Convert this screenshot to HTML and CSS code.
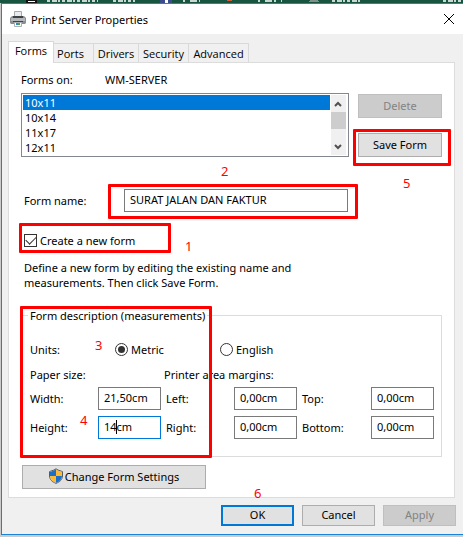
FILE: index.html
```html
<!DOCTYPE html>
<html lang="en">
<head>
<meta charset="utf-8">
<title>Print Server Properties</title>
<link rel="stylesheet" href="styles.css">
</head>
<body>
<div class="backdrop" aria-hidden="true">
  <svg width="463" height="3" viewBox="0 0 463 3">
    <path fill="#111" d="M26 0h11v3H26z"/>
    <path fill="#fff" d="M28 1h7v1h-7z"/>
    <path stroke="#c9d8d0" stroke-width="2" stroke-dasharray="3 2 5 1 2 2" d="M47 1h51M113 1h22M332 1h29M443 1h20"/>
    <path stroke="#c9d8d0" stroke-width="2" stroke-dasharray="2 5 7 2" d="M183 1h17M258 1h24"/>
    <path fill="#3b4c8c" d="M160 0h12v3h-12z"/>
    <path fill="#fff" d="M165 0h3v3h-3z"/>
    <path fill="#d8573c" d="M227 0h5v1h-5z"/>
    <path fill="#81908a" d="M310 0h8v1h1v1h-10V1h1z"/>
  </svg>
</div>
<main class="window">
  <header class="titlebar">
    <svg class="printer" width="16" height="16" viewBox="0 0 16 16" aria-hidden="true">
      <path fill="#e8ecee" stroke="#a4a9ac" d="M4.500.5h7v5h-7z"/>
      <path fill="#8b8f92" d="M2 5h12l2 2v5l-1 1H1l-1-1V7z"/>
      <path fill="#b4b8ba" d="M1 7h14v3H1z"/>
      <path fill="#404346" d="M3 5h10v2H3zM3 10h10v1H3z"/>
      <path fill="#fff" stroke="#aab0b3" d="M4.500 11.500h7v4h-7z"/>
      <path fill="#2c8ad0" d="M6 12h2v2H6z"/>
      <path fill="#45a45a" d="M8 12h2v2H8z"/>
    </svg>
    <h1 class="title">Print Server Properties</h1>
    <button class="close" type="button" aria-label="Close">
      <svg width="10" height="10" viewBox="0 0 10 10"><path stroke="#000" d="M0 0l10 10M10 0L0 10"/></svg>
    </button>
  </header>
  <nav class="tabs" role="tablist">
    <button class="tab tab-forms" type="button" role="tab" aria-selected="true">Forms</button>
    <button class="tab tab-ports" type="button" role="tab">Ports</button>
    <button class="tab tab-drivers" type="button" role="tab">Drivers</button>
    <button class="tab tab-security" type="button" role="tab">Security</button>
    <button class="tab tab-advanced" type="button" role="tab">Advanced</button>
  </nav>
  <form class="panel">
    <div class="server"><span class="server-label">Forms on:</span><span>WM-SERVER</span></div>
    <div class="forms">
      <div class="listbox">
        <ul class="list" role="listbox" aria-label="Forms">
          <li class="item selected" role="option" aria-selected="true">10x11</li>
          <li class="item" role="option">10x14</li>
          <li class="item" role="option">11x17</li>
          <li class="item" role="option">12x11</li>
        </ul>
        <div class="scrollbar" aria-hidden="true">
          <svg class="arrow" width="15" height="17" viewBox="0 0 15 17"><path fill="none" stroke="#505050" stroke-width="2" d="M4 11l3-3 3 3"/></svg>
          <div class="thumb"></div>
          <svg class="arrow" width="15" height="17" viewBox="0 0 15 17"><path fill="none" stroke="#505050" stroke-width="2" d="M4 7l3 3 3-3"/></svg>
        </div>
      </div>
      <div class="actions">
        <button class="button" type="button" disabled>Delete</button>
        <div class="marked mark-save"><button class="button" type="button">Save Form</button><span class="step">5</span></div>
      </div>
    </div>
    <div class="name-row">
      <label for="name">Form name:</label>
      <div class="marked mark-name"><input class="text name" id="name" type="text" value="SURAT JALAN DAN FAKTUR"><span class="step">2</span></div>
    </div>
    <div class="marked mark-create">
      <label class="choice"><input class="check" type="checkbox" checked>Create a new form</label>
      <span class="step">1</span>
    </div>
    <p class="help">Define a new form by editing the existing name and<br>measurements. Then click Save Form.</p>
    <div class="marked mark-description">
      <fieldset class="group">
        <legend class="legend">Form description (measurements)</legend>
        <div class="units">
          <span class="units-label">Units:</span>
          <label class="choice metric"><input class="radio" type="radio" name="units" checked>Metric</label>
          <label class="choice"><input class="radio" type="radio" name="units">English</label>
        </div>
        <div class="captions"><span>Paper size:</span><span>Printer area margins:</span></div>
        <div class="sizes">
          <label for="width">Width:</label><input class="text" id="width" type="text" value="21,50cm">
          <label for="left">Left:</label><input class="text" id="left" type="text" value="0,00cm">
          <label for="top">Top:</label><input class="text" id="top" type="text" value="0,00cm">
          <label for="height">Height:</label><div class="editing"><input class="text focused" id="height" type="text" value="14cm"><span class="caret"></span></div>
          <label for="right">Right:</label><input class="text" id="right" type="text" value="0,00cm">
          <label for="bottom">Bottom:</label><input class="text" id="bottom" type="text" value="0,00cm">
        </div>
      </fieldset>
      <span class="step step-units">3</span>
      <span class="step step-height">4</span>
    </div>
    <button class="button settings" type="button">
      <svg width="14" height="16" viewBox="0 0 14 16" aria-hidden="true">
        <path fill="#fff" d="M7 0l2 1.500L14 3v5c0 4-3 6.500-7 8-4-1.500-7-4-7-8V3l5-1.500z"/>
        <path fill="#1b6fc8" d="M7 1v7H1V4l4-1.500z"/>
        <path fill="#fdbb35" d="M7 1l2 1.500L13 4v4H7z"/>
        <path fill="#fdbb35" d="M1 8h6v7c-4-1.500-6-4-6-7z"/>
        <path fill="#1b6fc8" d="M7 8h6c0 3-2 5.500-6 7z"/>
        <path fill="none" stroke="#555b60" d="M7 .7l2 1.300 4.500 1.500V8c0 3.500-2.500 6-6.500 7.400C3 14 .5 11.500.5 8V3.500L5 2z"/>
      </svg>Change Form Settings
    </button>
  </form>
  <footer class="footer">
    <div class="ok-wrap"><button class="button short default" type="button">OK</button><span class="step step-ok">6</span></div>
    <button class="button short" type="button">Cancel</button>
    <button class="button short" type="button" disabled>Apply</button>
  </footer>
</main>
</body>
</html>
```
FILE: styles.css
```css
*, *::before, *::after { box-sizing: border-box; }

body {
  margin: 0;
  padding: 0 0 2px 1px;
  background: #cbcbcb;
  color: #000;
  font: 11px/15px "Noto Sans", "Open Sans", sans-serif;
}

button, input { font: inherit; color: inherit; }

.backdrop { height: 3px; margin-left: -1px; overflow: hidden; background: #175541; }
.backdrop svg { display: block; }

.window {
  border: 1px solid #1883d7;
  border-right: 0;
  background: #f0f0f0;
}

.titlebar {
  display: flex;
  align-items: center;
  height: 30px;
  padding: 0 9px 0 8px;
  background: #fff;
}
.title { flex: 1; margin: 0 0 0 5px; font-size: 11px; font-weight: 400; }
.close { display: flex; padding: 0; border: 0; background: none; }

.tabs { display: flex; align-items: flex-end; height: 28px; padding-left: 6px; font-family: "Open Sans", "Noto Sans", sans-serif; }
.tab {
  height: 19px;
  padding: 0;
  border: 1px solid #d9d9d9;
  border-width: 1px 1px 0 0;
  background: #f0f0f0;
  text-align: center;
}
.tab-forms {
  position: relative;
  width: 46px;
  height: 22px;
  margin-bottom: -1px;
  padding-bottom: 4px;
  border-left-width: 1px;
  background: #fff;
}
.tab-ports { width: 40px; padding-right: 6px; }
.tab-drivers { width: 45px; }
.tab-security { width: 50px; }
.tab-advanced { width: 60px; }

.panel {
  margin: 0 8px 0 6px;
  padding: 9px 12px 8px;
  border: 1px solid #dcdcdc;
  background: #fff;
}

.server { display: flex; }
.server-label { width: 84px; }

.forms { display: flex; gap: 9px; margin-top: 6px; }
.listbox {
  display: flex;
  flex: 1;
  height: 64px;
  padding: 1px 2px 1px 1px;
  border: 1px solid #828790;
}
.list { flex: 1; margin: 0 1px 0 0; padding: 0; list-style: none; }
.item { padding-left: 2px; }
.selected { background: #0078d7; color: #fff; }
.scrollbar { display: flex; flex-direction: column; width: 15px; background: #f0f0f0; }
.arrow { display: block; }
.thumb { height: 17px; margin-bottom: auto; background: #cdcdcd; }

.actions { display: flex; flex-direction: column; justify-content: space-between; width: 84px; padding-top: 1px; }
.button {
  width: 100%;
  height: 24px;
  padding: 0 0 2px;
  border: 1px solid #adadad;
  background: #e1e1e1;
}
.button:disabled { border-color: #bfbfbf; background: #ccc; color: #838383; }

.marked { position: relative; }
.marked::after {
  content: "";
  position: absolute;
  border: 3px solid #f00;
  border-radius: 1px;
  pointer-events: none;
}
.mark-save::after { inset: -4px -9px -9px -5px; }
.mark-name::after { inset: -5px -10px -7px -16px; }
.mark-create::after { inset: -10px auto -5px -2px; width: 152px; }
.mark-description::after { inset: -2px auto -1px -1px; width: 192px; }

.step { position: absolute; color: #f00; font-size: 13px; line-height: 16px; }
.mark-save .step { left: 45px; top: 42px; }
.mark-name .step { left: 97px; top: -26px; }
.mark-create .step { left: 164px; top: 5px; }
.step-units { left: 74px; top: 29px; }
.step-height { left: 59px; top: 104px; }
.step-ok { left: 33px; top: -20px; }

.text {
  width: 100%;
  height: 23px;
  padding: 0 5px 2px;
  border: 1px solid #7a7a7a;
  background: #fff;
  outline: 0;
}
.focused { border-color: #0078d7; }

.name-row { display: grid; grid-template-columns: 100px 1fr; align-items: center; margin: 32px 94px 0 3px; }
.mark-name { display: flex; }

.mark-create { margin-top: 21px; }
.choice { display: flex; align-items: center; gap: 3px; }
.mark-create .choice { padding-left: 3px; }
.check, .radio {
  flex: none;
  appearance: none;
  width: 13px;
  height: 13px;
  margin: 0;
  border: 1px solid #333;
  background: #fff;
}
.check:checked::before {
  content: "";
  display: block;
  width: 10px;
  height: 6px;
  margin: 1px;
  border: solid #333;
  border-width: 0 0 1px 1px;
  transform: rotate(-45deg);
}
.radio { border-radius: 50%; }
.radio:checked { padding: 2px; }
.radio:checked::before {
  content: "";
  display: block;
  width: 7px;
  height: 7px;
  border-radius: 50%;
  background: #333;
}

.help { margin: 12px 3px 18px; }

.group { min-width: 0; margin: 0; padding: 19px 6px 17px 8px; border: 1px solid #dcdcdc; }
.legend { margin-left: -2px; padding: 0 2px; }
.units { display: flex; align-items: center; }
.units-label { width: 85px; }
.metric { width: 105px; }
.captions { display: grid; grid-template-columns: 134px 1fr; margin-top: 10px; }
.sizes {
  display: grid;
  grid-template-columns: 68px 63px 73px 63px 74px 63px;
  gap: 6px 0;
  align-items: center;
  margin-top: 5px;
}
.sizes label { padding-left: 5px; }
.sizes label:nth-of-type(3n + 1) { padding-left: 0; }
.editing { position: relative; }
.caret { position: absolute; left: 18px; top: 4px; width: 1px; height: 14px; background: #000; }

.settings { display: flex; align-items: center; justify-content: center; gap: 2px; width: 184px; margin: 8px 0 0 1px; }

.footer { display: flex; justify-content: flex-end; gap: 8px; padding: 7px 7px 8px; }
.ok-wrap { position: relative; }
.short { display: block; width: 73px; height: 21px; }
.default { border: 2px solid #0078d7; }
```
